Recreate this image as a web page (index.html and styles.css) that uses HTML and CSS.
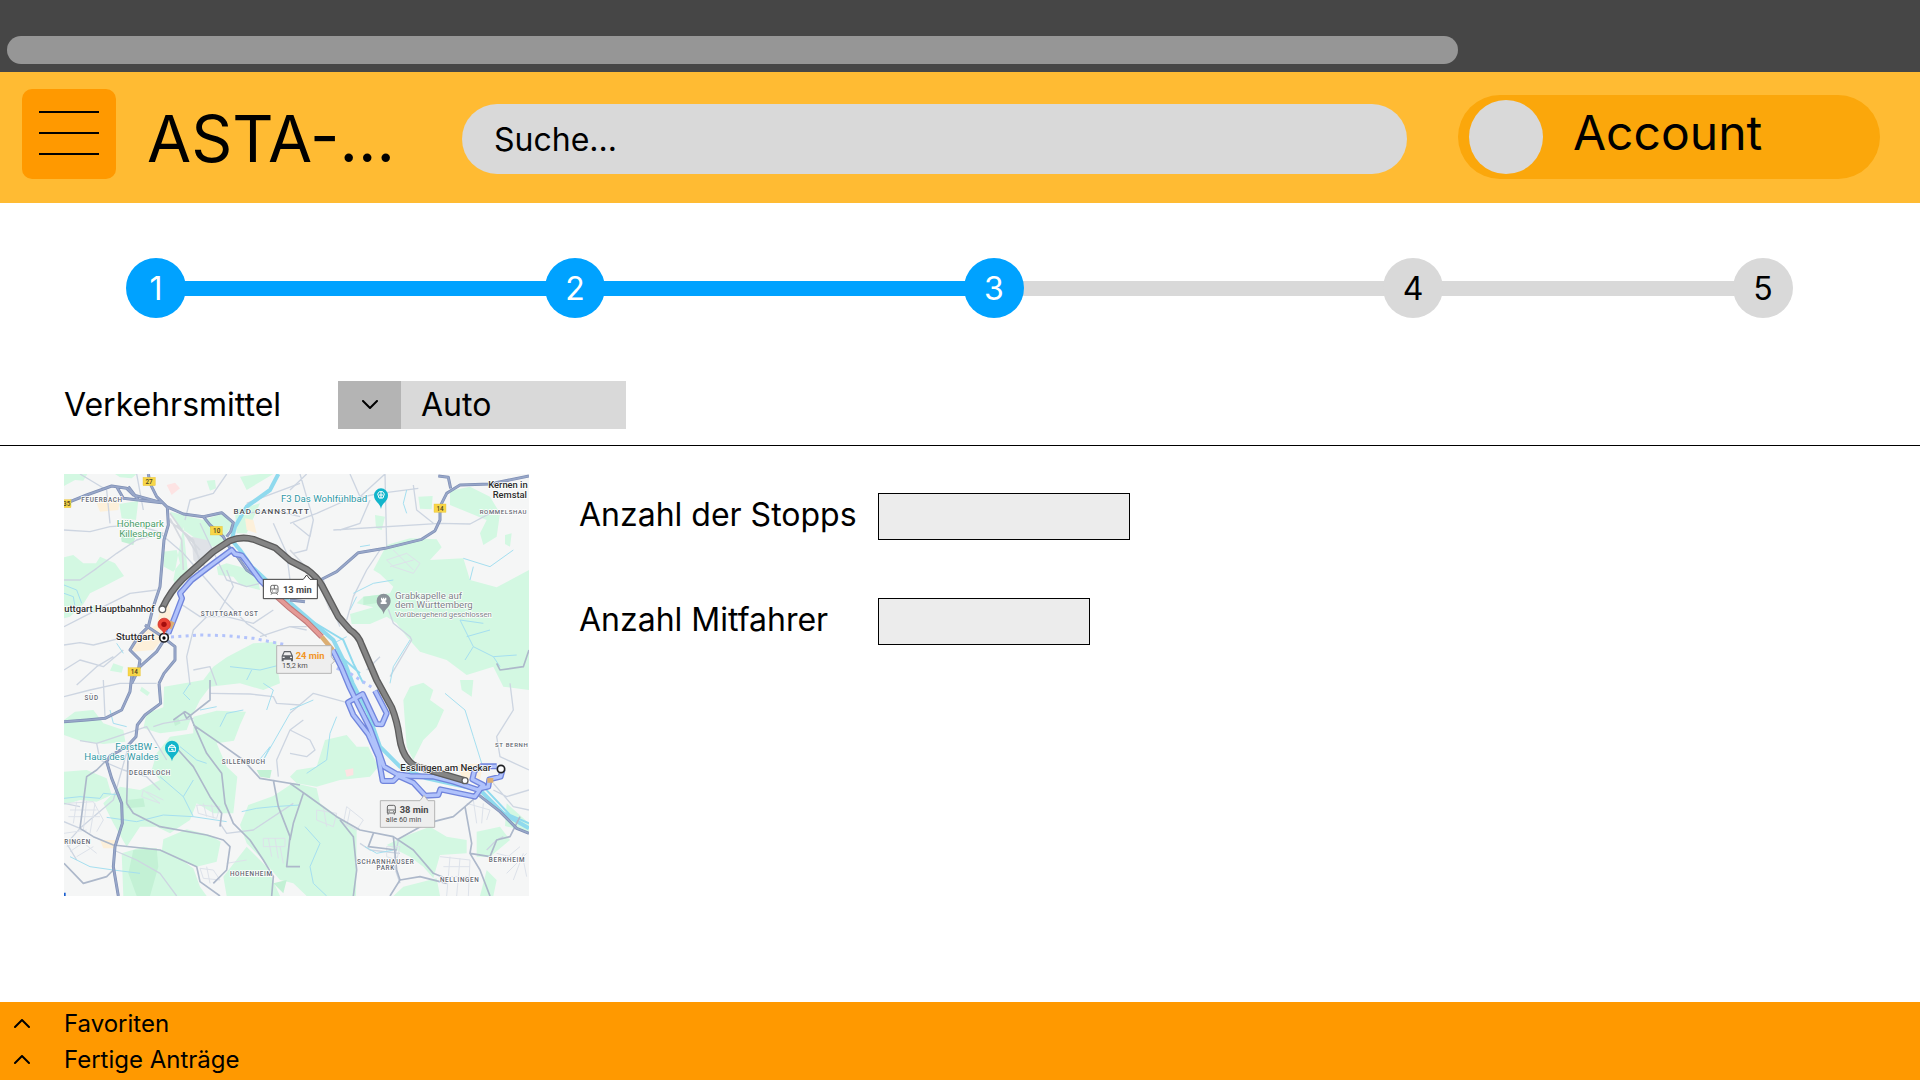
FILE: index.html
```html
<!DOCTYPE html>
<html lang="de">
<head>
<meta charset="utf-8">
<meta name="viewport" content="width=device-width, initial-scale=1">
<title>ASTA-Antrag</title>
<link rel="stylesheet" href="styles.css">
</head>
<body>
<div class="browser-bar"><div class="address"></div></div>

<header class="header">
  <button class="menu" type="button" aria-label="Menü"><span></span><span></span><span></span></button>
  <h1 class="title">ASTA-...</h1>
  <input class="search" type="text" placeholder="Suche..." aria-label="Suche">
  <button class="account" type="button"><span class="avatar"></span><span class="account-name">Account</span></button>
</header>

<main>
  <ol class="stepper">
    <li class="step done"><span>1</span></li>
    <li class="step done"><span>2</span></li>
    <li class="step current"><span>3</span></li>
    <li class="step"><span>4</span></li>
    <li class="step"><span>5</span></li>
  </ol>

  <div class="transport">
    <label for="transport">Verkehrsmittel</label>
    <div class="dropdown">
      <span class="dropdown-arrow"><svg width="16" height="10" viewBox="0 0 16 10"><path d="M1 1l7 7 7-7"/></svg></span>
      <select id="transport"><option>Auto</option><option>Bahn</option><option>Bus</option></select>
    </div>
  </div>

  <section class="details">
    <svg class="map" viewBox="12 12 1395 1266" role="img" aria-label="Karte Stuttgart – Esslingen am Neckar">
      <rect class="land" x="12" y="12" width="1395" height="1266"/>
      <g class="park">
        <path d="M12 12H82L70 32 45 30 12 48zM178 102L235 92 228 150 185 145zM330 125L390 140 430 150 490 130 520 160 500 190 490 215 460 230 420 215 385 190 355 170zM12 262L40 255 70 280 108 280 120 260 165 280 192 318 130 350 90 370 70 402 30 440 12 445zM310 245L350 240 360 280 340 305 312 290zM470 290L500 280 540 290 590 310 600 360 540 345 520 320 475 315zM440 32L465 30 468 55 450 62zM540 20L600 12H640L560 60zM370 170L340 330 355 360 385 320z"/>
        <path d="M165 12H230L215 25 180 22zM90 410L105 405 108 428 92 425zM525 120L600 100 560 190 530 190zM160 580L190 590 185 608 150 602zM245 650L270 668 262 678 240 662z"/>
        <path d="M430 630L460 590 500 562 580 520 650 515 655 610 660 640 610 660 540 640 450 650 420 690 395 740 380 780 300 790 250 775 260 730 310 712 312 650z"/>
        <path d="M12 750L45 725 100 720 130 760 190 780 196 815 130 822 60 812 12 795zM12 905L80 900 140 925 155 975 110 995 60 990 12 1005z"/>
        <path d="M330 800L400 790 400 740 470 722 558 725 540 765 522 812 470 820 500 890 532 920 520 1030 460 1030 410 1000 390 1050 330 1090 290 1070 240 1070 200 1130 160 1060 130 1000 180 950 240 960 300 930 275 900 290 850z"/>
        <path d="M310 1108L380 1078 450 1095 482 1115 470 1175 410 1190 350 1165 305 1145zM185 1150L250 1130 330 1145 400 1195 420 1250 440 1278H190zM540 1065L565 1005 640 978 700 938 770 955 780 1000 890 1080 888 1278H740L700 1240 660 1230 600 1160 560 1120zM500 1278L490 1220 560 1130 620 1190 660 1278z"/>
        <path d="M795 810L860 795 890 830 925 830 955 890 930 920 840 930 770 950 710 940 690 920 710 900 770 890zM1030 690L1050 650 1090 638 1120 660 1110 690 1152 720 1130 770 1090 810 1060 870 1040 830 1035 760zM1200 630H1240L1235 680 1205 660z"/>
        <path d="M980 1125L1030 1100 1110 1070 1160 1100 1220 1110 1220 1150 1140 1155 1120 1225 1090 1190 1050 1160zM1250 1085L1320 1070 1350 1110 1290 1160 1250 1160zM1340 1000L1407 1060V1085L1335 1068zM1030 1250L1130 1225 1140 1278H1000zM1280 1200L1310 1230 1300 1278H1260z"/>
        <path d="M980 225L1050 205 1130 208 1145 232 1110 270 1210 265 1230 330 1310 352 1407 300V660L1330 650 1300 590 1220 615 1160 570 1080 545 1040 500 1010 460 980 440 930 462 875 462 870 432 940 412 890 400 910 380 990 370 1000 350 960 312 940 300zM1170 62L1230 50 1290 80 1320 130 1310 200 1270 225 1260 190 1280 150 1170 105zM1075 80L1118 78 1115 118 1080 116zM945 135L975 140 965 180 948 175zM1335 195L1355 190 1350 230 1335 222z"/>
      </g>
      <g class="park dark">
        <path d="M200 990L250 985 255 1010 200 1015zM220 1140L290 1135 295 1190 270 1278H230L205 1210zM340 750L355 745 362 760 345 768zM590 900L635 900 630 925 600 920zM180 180L230 185 220 225 185 215zM640 1240L680 1230 670 1270zM910 380L980 372 980 395 910 405z"/>
      </g>
      <g class="block">
        <path d="M320 45L345 38 360 55 335 75zM855 900L880 895 880 915 860 920z" class="rose"/>
        <path d="M215 500L290 465 300 420 325 400 335 440 330 480 280 540 220 545zM110 100L180 85 175 120 120 125zM555 145L580 150 590 190 560 180zM120 1110H165V1135H130zM1190 885L1270 880 1260 930 1210 930z" class="sand"/>
        <path d="M395 200L440 210 470 250 420 290 400 270z" class="rail"/>
      </g>

      <g class="minor">
        <path d="M12 330L60 330 110 295 170 250 230 210 300 190M12 180L90 185 150 170 230 165 310 190M60 12L140 60 150 160M12 470L90 430 150 400 210 370 290 360M12 525L60 518 100 525 200 500M12 600L60 570 130 590 190 540M50 645L110 590 160 560M230 12L250 120M375 150L390 90 460 70 500 12M300 190L370 250 440 330 500 400 560 460 620 500M360 400L420 440 500 440 580 460 640 420M390 645L380 560 400 480 440 440M470 645L450 590 400 600M420 160L500 330 560 350 640 330M640 160L680 250 690 330M560 100L720 40M560 130L640 120 720 140M480 420L520 350 500 300M600 500L690 470 740 470"/>
        <path d="M690 160L770 130 860 90 960 70 1075 55M690 60L740 12M720 12L760 150 740 240 700 250M760 150L750 200 700 160M870 12L900 80 975 12 980 230M820 180L1140 160 1230 162 1290 130M1060 45L1070 120 1120 160M860 450L880 380 920 300 960 240M690 470L740 480M790 330L810 400 840 470M985 418L1000 460 1050 500 1055 510 990 620M930 90L900 160 840 180"/>
        <path d="M130 630L135 740M12 680L90 660 180 640 290 640M60 812L110 820 200 790 260 770 320 870M280 770L310 760 400 745M12 1055L60 1075 160 990 205 830M12 1000L60 1010M60 1075L20 1120 50 1170M110 820L120 870 190 900 260 920 300 960M160 1140L230 1170 300 1210 350 1278M655 920L650 870 690 780 730 750M450 670L570 672 640 680 650 700 720 705"/>
        <path d="M480 1060L500 1090 580 1080 700 1000M690 730L760 670 870 700M690 780L750 810 765 840 740 860 690 850M900 1120L930 1140 1020 1150M1350 640L1360 720 1310 800 1320 860 1407 900M1300 960L1340 980 1407 960M1300 940L1360 1010 1407 1020M1280 1140L1310 1110 1330 1100M920 600L960 560M1015 1112L1000 1180 1020 1240"/>
      </g>
      <g class="streets">
        <path d="M20 1000L100 995 130 1050 110 1085M30 1020H110M25 1040H120M50 995L40 1060M80 992L70 1080M105 1000L90 1090M12 1090L80 1080M20 1130L60 1110 110 1150M30 1145L80 1110M50 1160L100 1130M245 980L300 1000 250 960zM260 965L310 990M410 1005L480 1010 470 1045 415 1030zM430 1000L440 1040M455 1003L460 1045M610 1105H675V1130H610zM625 1105L635 1160M645 1105L655 1165M660 1130L670 1180M420 1195L460 1200 480 1230 430 1225zM440 1190L450 1240M500 1180L560 1170M770 1020L830 1030 820 1070 770 1050zM790 1010L800 1070M860 1010L910 1050 890 1080 850 1060zM870 1020L860 1070M1140 1160L1230 1170 1225 1278M1150 1190H1230M1150 1220H1225M1170 1160L1160 1278M1200 1165L1190 1278M1310 1150L1390 1170 1400 1220M1320 1180L1380 1130M1340 1210L1400 1150M1360 1230L1390 1150M980 270L1040 250 1080 280 1060 310 1000 290zM990 290L1060 270M1000 240L1060 300M1220 1000L1290 1020 1280 1050M1240 990L1250 1060M1270 1000L1265 1060M980 1130L1020 1130 1010 1170 980 1160z"/>
      </g>
      <g class="rail-lines"><path d="M330 130L380 200 440 300M325 150L400 210 420 280M690 240L745 300 790 370 810 420M350 165L420 240M740 300L775 340M330 145L365 210 370 300"/></g>
      <g class="stream">
        <path d="M12 345L50 360 65 400M12 370L40 380 45 410M170 520L190 550M12 985L60 980 120 985 130 970 180 975M140 1042L230 1055 310 1035 400 1040 500 1055M30 1160L90 1190 160 1200 240 1210M545 1025L590 1015 640 1010 720 1005M360 830L410 870 440 880M300 920L370 980 400 1040M370 980L400 930M480 770L500 730 550 720M420 720L470 710M590 880L630 830 610 870 690 730M620 720L640 660 610 640M150 720L160 760 200 770M390 640L370 670 390 690M510 590L600 600 680 580M560 630L575 600"/>
        <path d="M740 910L800 870 810 790 830 740M690 720L760 690M735 1070L780 1120 750 1190 760 1240 800 1278M915 1130L950 1150 1000 1140M1155 670L1215 720 1240 800 1265 880M1360 240L1290 290 1210 265M1230 330L1240 290M1270 460L1200 450 1240 530 1300 560 1320 590M1220 500L1290 480M1240 530L1215 570M880 370L940 340 1000 330M870 420L890 380M820 520L860 500M1050 510L1000 590 990 640M900 230L930 225M1040 60L1030 100 1040 130M1300 560L1370 555"/>
      </g>
      <path class="river" d="M655 12L630 60 560 110 525 170 515 210 540 240 575 290 640 350 690 398 750 450 820 510 855 580 878 640 925 730 960 830 1020 890 1100 925 1260 960 1330 1030 1407 1075"/>
      <path class="river thin" d="M750 450L850 510 880 580 910 640M820 540L900 610M1270 950L1350 1035 1407 1060"/>

      <g class="road">
        <path d="M340 750L375 725 390 735 400 760 440 850 485 910 495 1000 520 1060 570 1110 610 1170 640 1220 635 1278M370 725L380 745 450 690 450 630M400 765L480 820 550 870 600 925 720 945M60 1075L100 1100 160 1125 300 1140 410 1190 420 1235 480 1278M200 1000L220 1030 300 1070 440 1095 490 1110 510 1130 500 1200 460 1240M355 840L400 890 450 980 485 1030 480 1070M640 930L655 1010 690 1100 680 1190 720 1190M205 830L200 1000M12 1180L70 1240 140 1220 160 1200M60 1075L80 920 110 900 160 850"/>
        <path d="M690 940L740 975 830 1040 900 1080 1000 1100 1060 1140 1120 1210 1170 1230M730 970L700 1060 690 1110M840 1050L880 1100 890 1200 880 1278M1000 1100L1010 1200 1020 1230 1080 1220 1160 1240M1215 1010L1235 1120 1230 1150 1260 1200 1290 1278M1230 1150L1290 1160 1310 1110 1350 1100 1380 1040M1010 1110L1100 1060 1180 1040 1250 980M940 1090L925 1130 1010 1140M1310 580L1320 600 1390 590 1407 540M1020 1230L990 1278"/>
      </g>
      <g class="highway-case"><path id="highways" d="M265 12L270 40 290 80 320 110 370 132 430 140 485 128 520 158 512 185 500 200M12 102L80 75 155 48 200 55 220 75 305 98M205 50L235 90M170 50L190 85 305 98M322 112L325 165 312 210 300 350 280 410 265 470 235 500 210 540 240 570 235 600 215 640M430 140L450 165 490 200 510 235M255 465L300 495 345 530 345 570 312 610 297 640M325 490L290 545 240 590 215 620 210 665 185 720 135 745 80 750 12 755M297 640L302 700 255 735 232 765 228 800 200 830 150 858 140 875 155 925 185 1000 187 1060 165 1130 160 1190 175 1278M775 333L830 305 895 248 975 235 1085 208 1125 182 1140 150 1140 110 1160 70 1200 45 1290 42 1407 18M1135 18L1165 22 1172 55M515 235L560 300 620 340M690 390L735 395M1250 970L1320 1025 1370 1075 1407 1090"/></g>
      <g class="highway"><use href="#highways"/></g>

      <path class="walk" d="M333 501L420 495 500 497 580 505 680 525M830 595L870 610 940 655"/>
      <g class="route-blue-case"><path id="route" d="M325 490L345 440 366 385 360 370 395 330 450 288 515 240 525 252 545 256 560 275 600 330 640 370M818 540L843 590 868 650 895 705 930 775 958 850 972 890 1010 912 1050 918 1120 920 1180 935 1255 960 1270 945 1237 928 1243 903 1262 889 1310 889M945 662L980 730 966 763 950 762 928 715 908 672 864 697 880 735 925 793 955 860 968 933 1000 933 1015 918 1060 938 1096 977 1135 975 1141 958 1245 980 1262 955 1285 950 1288 928 1322 920 1328 898"/></g>
      <g class="route-blue"><use href="#route"/></g>
      <path class="traffic-case" d="M640 370L690 415 740 455 785 500"/><path class="traffic" d="M640 370L690 415 740 455 785 500"/>
      <path class="slow" d="M785 500L818 540M1282 931H1300M328 475L338 455"/>
      <path class="route-rail-case" d="M307 415Q330 365 370 325L460 245 510 212Q545 198 580 208L645 233 690 272 740 298Q770 320 785 345L835 440 870 480Q895 495 905 525L950 630 995 712Q1012 755 1018 800T1045 870Q1060 890 1090 895L1215 932"/>
      <path class="route-rail" d="M307 415Q330 365 370 325L460 245 510 212Q545 198 580 208L645 233 690 272 740 298Q770 320 785 345L835 440 870 480Q895 495 905 525L950 630 995 712Q1012 755 1018 800T1045 870Q1060 890 1090 895L1215 932"/>
      <g class="stop"><circle cx="307" cy="418" r="10"/><circle cx="1215" cy="932" r="9"/></g>
      <g class="end"><circle cx="312" cy="503" r="13"/><circle cx="1323" cy="897" r="11"/></g>
      <circle cx="312" cy="504" r="5"/>
      <path fill="#ea4335" stroke="#c5221f" stroke-width="2" d="M312 493C309 475 294 480 294 463A18 18 0 0 1 331 463C331 480 316 475 312 493z"/><circle cx="312" cy="463" r="8" fill="#a50e0e"/>

      <g class="shield"><rect x="249" y="22" width="37" height="25"/><rect x="0" y="89" width="33" height="24"/><rect x="451" y="169" width="36" height="26"/><rect x="204" y="593" width="37" height="25"/><rect x="1122" y="102" width="36" height="25"/></g>
      <g class="shield-text"><text x="267" y="42">27</text><text x="20" y="109">35</text><text x="470" y="189">10</text><text x="223" y="613">14</text><text x="1140" y="122">14</text></g>

      <g class="district">
        <text x="126" y="95">FEUERBACH</text>
        <text x="509" y="439">STUTTGART OST</text><text class="edge" x="1259" y="131">ROMMELSHAU</text>
        <text x="95" y="689">SÜD</text><text x="270" y="914">DEGERLOCH</text><text x="551" y="882">SILLENBUCH</text><text x="53" y="1123">RINGEN</text><text x="574" y="1217">HOHENHEIM</text>
        <text class="edge" x="1305" y="831">ST BERNH</text><text x="977" y="1181">SCHARNHAUSER</text><text x="977" y="1200">PARK</text><text x="1199" y="1235">NELLINGEN</text><text x="1341" y="1175">BERKHEIM</text>
      </g>
      <g class="town"><text x="635" y="131">BAD CANNSTATT</text></g>
      <g class="place-green"><text x="241" y="172">Höhenpark</text><text x="241" y="202">Killesberg</text></g>
      <g class="place-teal"><text x="663" y="97">F3 Das Wohlfühlbad</text><text x="166" y="839">ForstBW -</text><text x="73" y="869">Haus des Waldes</text></g>
      <g class="place-gray"><text x="1005" y="386">Grabkapelle auf</text><text x="1005" y="415">dem Württemberg</text><text class="note" x="1005" y="442">Vorübergehend geschlossen</text></g>
      <g class="city"><text x="168" y="509">Stuttgart</text><text x="1021" y="904">Esslingen am Neckar</text></g>
      <g class="city small"><text x="13" y="427">uttgart Hauptbahnhof</text><text x="1285" y="53">Kernen in</text><text x="1298" y="83">Remstal</text></g>

      <g class="pin teal"><path d="M963 117C960 98 942 96 942 76A21 21 0 0 1 984 76C984 96 966 98 963 117z"/><path d="M336 874C333 855 315 853 315 833A21 21 0 0 1 357 833C357 853 339 855 336 874z"/></g>
      <path class="pin gray" d="M971 433C968 414 950 412 950 392A21 21 0 0 1 992 392C992 412 974 414 971 433z"/>
      <g class="glyph"><path d="M953 72l5-7h10l5 7-4 12h-12zM957 75h12M963 65v20"/><path d="M326 832v12h20v-12M324 832h24M329 832v-5h14v5M333 838h6v6M332 827l4-4 4 4"/><path class="fill" d="M963 383h4v4h2v-4h4v4h2v-4h4v8h-2v6h3v5h-18v-5h3v-6h-2z"/></g>

      <g class="bubble white"><path d="M610 328H730L740 315 750 328H772V386H610z"/></g>
      <g class="bubble"><path d="M650 527H814V560L824 573 814 583V610H650zM961 992H1080L1092 976 1104 992H1124V1072H961z"/></g>
      <g class="vehicle"><path d="M637 346h12q5 0 5 5v13q0 5-5 5h-12q-5 0-5-5v-13q0-5 5-5zM633 357h20M643 346v11M637 369l-4 5M649 369l4 5M636 363h3M647 363h3"/><path d="M987 1006h14q5 0 5 5v18h-24v-18q0-5 5-5zM982 1020h24M984 1029v5M1003 1029v5M986 1025h3M999 1025h3"/></g>
      <path class="car" fill-rule="evenodd" d="M672 543h20l7 15v16h-6v-5h-22v5h-6v-16zM674 547l-4 9h24l-4-9zM668 560v4h6v-4zM690 560v4h6v-4z"/>
      <g class="time"><text x="669" y="368">13 min</text><text class="orange" x="707" y="567">24 min</text><text x="1019" y="1028">38 min</text></g>
      <g class="distance"><text x="666" y="594">15,2 km</text><text x="977" y="1057">alle 60 min</text></g>
      <path d="M12 1268h5v10h-5z" fill="#1a5fd0"/>
    </svg>

    <form class="form">
      <label for="stops">Anzahl der Stopps</label>
      <input class="field" id="stops" type="text">
      <label for="riders">Anzahl Mitfahrer</label>
      <input class="field short" id="riders" type="text">
    </form>
  </section>
</main>

<footer class="footer">
  <button type="button"><svg width="16" height="10" viewBox="0 0 16 10"><path d="M1 8l7-7 7 7"/></svg>Favoriten</button>
  <button type="button"><svg width="16" height="10" viewBox="0 0 16 10"><path d="M1 8l7-7 7 7"/></svg>Fertige Anträge</button>
</footer>
</body>
</html>
```
FILE: styles.css
```css
* { box-sizing: border-box; }

body {
  margin: 0;
  min-height: 100vh;
  display: flex;
  flex-direction: column;
  background: #fff;
  color: #000;
  font-family: Inter, "Liberation Sans", sans-serif;
  font-size: 32px;
  line-height: 44px;
}

button, input, select {
  font: inherit;
  color: inherit;
  border: 0;
  border-radius: 0;
  margin: 0;
  padding: 0;
}

/* Browser chrome */
.browser-bar { padding: 36px 4px 8px 7px; background: #464646; }
.address { width: 76%; height: 28px; border-radius: 14px; background: #969696; }

/* Header */
.header {
  display: flex;
  align-items: center;
  padding: 17px 40px 18px 22px;
  background: #ffbb33;
}
.menu {
  width: 94px;
  height: 90px;
  margin-bottom: 6px;
  padding: 0 17px 2px;
  display: flex;
  flex-direction: column;
  justify-content: center;
  gap: 19px;
  border-radius: 10px;
  background: #ff9900;
}
.menu span { height: 2px; background: #000; }
.title {
  width: 315px;
  margin: 4px 0 0 31px;
  font-size: 64px;
  line-height: 64px;
  font-weight: 400;
}
.search {
  flex: 1;
  min-width: 0;
  height: 70px;
  margin-top: 4px;
  padding: 0 32px;
  border-radius: 35px;
  background: #d9d9d9;
}
.search::placeholder { color: #000; opacity: 1; }
.account {
  width: 23%;
  max-width: 422px;
  height: 84px;
  margin-left: 51px;
  padding: 0 11px;
  display: flex;
  align-items: center;
  gap: 30px;
  border-radius: 42px;
  background: #fba70b;
  font-size: 48px;
}
.avatar { width: 74px; height: 74px; border-radius: 50%; background: #d9d9d9; }
.account-name { margin-bottom: 8px; }

/* Progress */
.stepper {
  display: grid;
  grid-template-columns: 419fr 419fr 419fr 350fr 60px;
  margin: 55px 127px 63px 126px;
  padding: 0;
  list-style: none;
}
.step { display: flex; align-items: center; }
.step span {
  z-index: 1;
  width: 60px;
  height: 60px;
  border-radius: 50%;
  background: #d9d9d9;
  line-height: 62px;
  text-align: center;
}
.step:not(:last-child)::after {
  content: "";
  flex: 1;
  height: 15px;
  margin: 0 -4px;
  background: #d9d9d9;
}
.done span, .current span { background: #00a2ff; color: #fff; }
.done:not(:last-child)::after { background: #00a2ff; }

/* Means of transport */
.transport {
  display: flex;
  align-items: center;
  padding: 0 64px 16px;
  border-bottom: 1px solid #000;
}
.transport label { width: 274px; }
.dropdown { display: flex; width: 288px; height: 48px; background: #d9d9d9; }
.dropdown-arrow {
  display: flex;
  align-items: center;
  justify-content: center;
  width: 63px;
  background: #b4b4b4;
}
.dropdown select { flex: 1; padding: 0 20px; appearance: none; background: none; }
.dropdown svg, .footer svg { fill: none; stroke: #000; stroke-width: 2; stroke-linecap: round; stroke-linejoin: round; }

/* Route details */
.details { display: flex; align-items: flex-start; gap: 50px; padding: 28px 64px 40px; }
.form {
  display: grid;
  grid-template-columns: 299px auto;
  row-gap: 58px;
  margin-top: 19px;
}
.field { width: 252px; height: 47px; padding: 0 12px; border: 1px solid #000; background: #ececec; }
.field.short { width: 212px; }

/* Footer */
.footer { margin-top: auto; padding: 4px 14px 2px; background: #ff9900; }
.footer button {
  display: flex;
  align-items: center;
  gap: 34px;
  background: none;
  font-size: 24px;
  line-height: 36px;
}

/* Map: three drawing units to one pixel */
.map { flex: none; width: 465px; height: 422px; font-family: Roboto, "Liberation Sans", sans-serif; }
.map path { stroke-linejoin: round; }
.land { fill: #f5f6f6; }
.park { fill: #d3f8e2; }
.park.dark { fill: #c3f1d5; }
.rose { fill: #fde3e3; }
.sand { fill: #fdf0da; }
.rail { fill: #dfe2e7; }
.minor, .streets, .rail-lines, .stream, .road, .river, .highway-case, .highway, .walk,
.route-blue, .route-blue-case, .traffic, .traffic-case, .slow, .route-rail, .route-rail-case { fill: none; }
.minor { stroke: #cdd5e1; stroke-width: 4; }
.streets { stroke: #dde2ea; stroke-width: 3; }
.rail-lines { stroke: #d5d9df; stroke-width: 5; }
.stream { stroke: #a5dff0; stroke-width: 3; }
.road { stroke: #adb8ca; stroke-width: 5; }
.river { stroke: #90daee; stroke-width: 12; }
.river.thin { stroke-width: 6; }
.highway-case { stroke: #7f8fb4; stroke-width: 9; }
.highway { stroke: #98a7c9; stroke-width: 5; }
.walk { stroke: #b3c3fb; stroke-width: 9; stroke-dasharray: 9 13; }
.route-blue-case { stroke: #7185dc; stroke-width: 18; }
.route-blue { stroke: #b0c2fb; stroke-width: 10; }
.traffic-case { stroke: #c07878; stroke-width: 17; }
.traffic { stroke: #e49a96; stroke-width: 11; }
.slow { stroke: #dcae72; stroke-width: 14; }
.route-rail-case { stroke: #5c5c5c; stroke-width: 21; }
.route-rail { stroke: #858585; stroke-width: 13; }
.stop { fill: #fff; stroke: #606060; stroke-width: 4; }
.end { fill: #fff; stroke: #202124; stroke-width: 5; }
.shield { fill: #f8d648; stroke: #e3bd28; stroke-width: 1; }
.shield-text { font-size: 19px; font-weight: 500; text-anchor: middle; fill: #4d4522; }
.district, .town, .place-green, .place-teal, .place-gray, .city { stroke: #fff; stroke-width: 4; paint-order: stroke; }
.district { font-size: 19px; font-weight: 500; letter-spacing: 2px; text-anchor: middle; fill: #5f6670; }
.district .edge { font-size: 18px; text-anchor: start; }
.town { font-size: 24px; font-weight: 500; letter-spacing: 3px; text-anchor: middle; fill: #4b4f55; }
.place-green { font-size: 29px; text-anchor: middle; fill: #4a9d68; }
.place-teal { font-size: 29px; fill: #2e97a5; }
.place-gray { font-size: 29px; fill: #7c8388; }
.place-gray .note { font-size: 23px; }
.city { font-size: 29px; font-weight: 500; fill: #2c2c2c; }
.city.small { font-size: 28px; }
.pin.teal { fill: #12b5cb; }
.pin.gray { fill: #8a9299; }
.glyph { fill: none; stroke: #fff; stroke-width: 3; }
.glyph .fill { fill: #fff; stroke: none; }
.bubble { fill: #eeeeee; stroke: #b5b5b5; stroke-width: 3; }
.bubble.white { fill: #fff; stroke: #3c3c3c; }
.vehicle { fill: none; stroke: #666; stroke-width: 3; }
.car { fill: #5f6368; }
.time { font-size: 28px; font-weight: 700; fill: #4a4a4a; }
.time .orange { fill: #f29527; }
.distance { font-size: 22px; fill: #505050; }
```
